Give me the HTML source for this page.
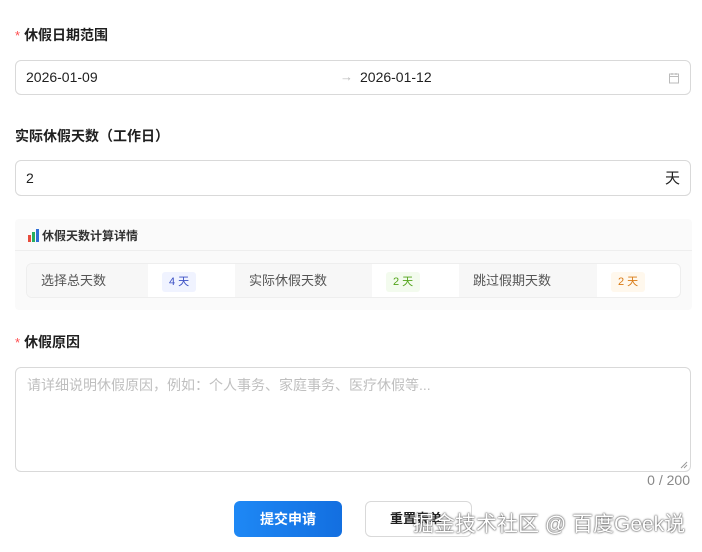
<!DOCTYPE html>
<html><head><meta charset="utf-8"><style>
*{box-sizing:border-box;margin:0;padding:0}
body{width:702px;height:552px;background:#fff;font-family:"Liberation Sans","Noto Sans CJK SC",sans-serif;color:#1f1f1f;position:relative;overflow:hidden}
.abs{position:absolute}
.lbl{font-size:14px;font-weight:bold;color:#1f1f1f}
.star{color:#ff4d4f;font-weight:normal;margin-right:4px;font-size:13px}
.inp{border:1px solid #d9d9d9;border-radius:6px;background:#fff}
.cell{position:absolute;top:0;height:34px;line-height:34px;font-size:13px;color:#555}
.tag{display:inline-block;height:20px;line-height:20px;padding:0 7px;border-radius:3px;font-size:11px}
</style></head><body>
<div class="abs lbl" style="left:15px;top:25px"><span class="star">*</span>休假日期范围</div>
<div class="abs inp" style="left:15px;top:60px;width:676px;height:35px">
 <span class="abs" style="left:10px;top:8px;font-size:14px">2026-01-09</span>
 <span class="abs" style="left:324px;top:8px;font-size:13px;color:#bbb">→</span>
 <span class="abs" style="left:344px;top:8px;font-size:14px">2026-01-12</span>
 <svg class="abs" style="left:652px;top:11px" width="12" height="12" viewBox="0 0 12 12"><rect x="1.5" y="2" width="9" height="9" fill="none" stroke="#bbb"/><line x1="1.5" y1="4.5" x2="10.5" y2="4.5" stroke="#bbb"/><line x1="4" y1="1" x2="4" y2="3" stroke="#bbb"/><line x1="8" y1="1" x2="8" y2="3" stroke="#bbb"/></svg>
</div>
<div class="abs lbl" style="left:15px;top:126px">实际休假天数（工作日）</div>
<div class="abs inp" style="left:15px;top:160px;width:676px;height:36px">
 <span class="abs" style="left:10px;top:9px;font-size:14px">2</span>
 <span class="abs" style="right:10px;top:8px;font-size:15px;line-height:20px">天</span>
</div>
<div class="abs" style="left:15px;top:219px;width:677px;height:91px;background:#fafafa;border-radius:4px">
 <div class="abs" style="left:12px;top:8px;font-size:12px;font-weight:bold;color:#333">
  <svg width="13" height="13" viewBox="0 0 13 13" style="vertical-align:-2px;margin-right:2px"><rect x="1" y="6" width="3" height="7" fill="#e74c3c"/><rect x="5" y="3" width="3" height="10" fill="#27ae60"/><rect x="9" y="0" width="3" height="13" fill="#2f6fd6"/></svg>休假天数计算详情</div>
 <div class="abs" style="left:0;top:31px;width:677px;height:1px;background:#eee"></div>
 <div class="abs" style="left:11px;top:44px;width:655px;height:35px;border:1px solid #eee;border-radius:6px;background:#fff;overflow:hidden">
  <div class="cell" style="left:0;width:121px;background:#f7f7f7;padding-left:14px">选择总天数</div>
  <div class="cell" style="left:121px;width:87px;padding-left:14px"><span class="tag" style="background:#f0f3ff;color:#3a4fc4">4 天</span></div>
  <div class="cell" style="left:208px;width:137px;background:#f7f7f7;padding-left:14px">实际休假天数</div>
  <div class="cell" style="left:345px;width:87px;padding-left:14px"><span class="tag" style="background:#f3fbee;color:#52a41a">2 天</span></div>
  <div class="cell" style="left:432px;width:138px;background:#f7f7f7;padding-left:14px">跳过假期天数</div>
  <div class="cell" style="left:570px;width:85px;padding-left:14px"><span class="tag" style="background:#fff8ed;color:#d97a14">2 天</span></div>
 </div>
</div>
<div class="abs lbl" style="left:15px;top:332px"><span class="star">*</span>休假原因</div>
<div class="abs inp" style="left:15px;top:367px;width:676px;height:105px">
 <span class="abs" style="left:11px;top:7px;font-size:14px;color:#bfbfbf">请详细说明休假原因，例如：个人事务、家庭事务、医疗休假等...</span>
 <svg class="abs" style="right:2px;bottom:2px" width="8" height="8"><line x1="1" y1="7" x2="7" y2="1" stroke="#999"/><line x1="4" y1="7" x2="7" y2="4" stroke="#999"/></svg>
</div>
<div class="abs" style="right:12px;top:472px;font-size:14px;color:#888">0 / 200</div>
<div class="abs" style="left:234px;top:501px;width:108px;height:36px;border-radius:6px;background:linear-gradient(90deg,#1e88f5,#136fe0);color:#fff;font-size:14px;font-weight:bold;text-align:center;line-height:36px">提交申请</div>
<div class="abs" style="left:365px;top:501px;width:107px;height:36px;border-radius:6px;border:1px solid #d9d9d9;background:#fff;font-size:13px;font-weight:bold;padding-left:24px;line-height:34px">重置表单</div>
<div class="abs" style="left:413px;top:508px;font-size:21px;color:#fff;text-shadow:0 0 2px #444,0 0 1px #444;white-space:nowrap">掘金技术社区 @ 百度Geek说</div>
</body></html>
